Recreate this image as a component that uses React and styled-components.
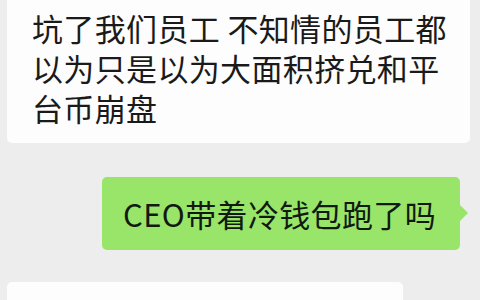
import React from "react";
import styled, { createGlobalStyle } from "styled-components";

const Global = createGlobalStyle`
  html, body {
    margin: 0;
    padding: 0;
    background: #ededed;
    overflow: hidden;
  }
  body {
    font-family: "Noto Sans CJK SC", "Noto Sans", sans-serif;
  }
`;

const Chat = styled.div`
  width: 480px;
  height: 300px;
  overflow: hidden;
  background: #ededed;
`;

const List = styled.div`
  display: flex;
  flex-direction: column;
  margin-top: -12px;
`;

const Row = styled.div`
  display: flex;
  justify-content: ${(p) => (p.$mine ? "flex-end" : "flex-start")};
  padding: ${(p) => (p.$mine ? "0 20px 0 0" : "0 0 0 7px")};
  margin-bottom: ${(p) => p.$gap || 0}px;
`;

const Bubble = styled.div`
  position: relative;
  box-sizing: border-box;
  border-radius: 5px;
  font-size: 31px;
  letter-spacing: 0.35px;
  color: #1a1a1a;
  background: ${(p) => (p.$mine ? "#98e56a" : "#fdfdfd")};
`;

const Incoming = styled(Bubble)`
  width: 463px;
  padding: 20px 16px 15px 25px;
  line-height: 40px;
`;

const Outgoing = styled(Bubble)`
  padding: 16px 24px 16px 21px;
  line-height: 41px;
  color: #121a10;
  &::after {
    content: "";
    position: absolute;
    right: -8px;
    top: 28px;
    width: 0;
    height: 0;
    border-top: 8px solid transparent;
    border-bottom: 8px solid transparent;
    border-left: 8px solid #98e56a;
  }
`;

const Pending = styled(Bubble)`
  width: 396px;
  height: 80px;
`;

export default function App() {
  return (
    <Chat>
      <Global />
      <List>
        <Row $gap={34}>
          <Incoming>坑了我们员工 不知情的员工都以为只是以为大面积挤兑和平台币崩盘</Incoming>
        </Row>
        <Row $mine $gap={32}>
          <Outgoing $mine>CEO带着冷钱包跑了吗</Outgoing>
        </Row>
        <Row>
          <Pending />
        </Row>
      </List>
    </Chat>
  );
}
